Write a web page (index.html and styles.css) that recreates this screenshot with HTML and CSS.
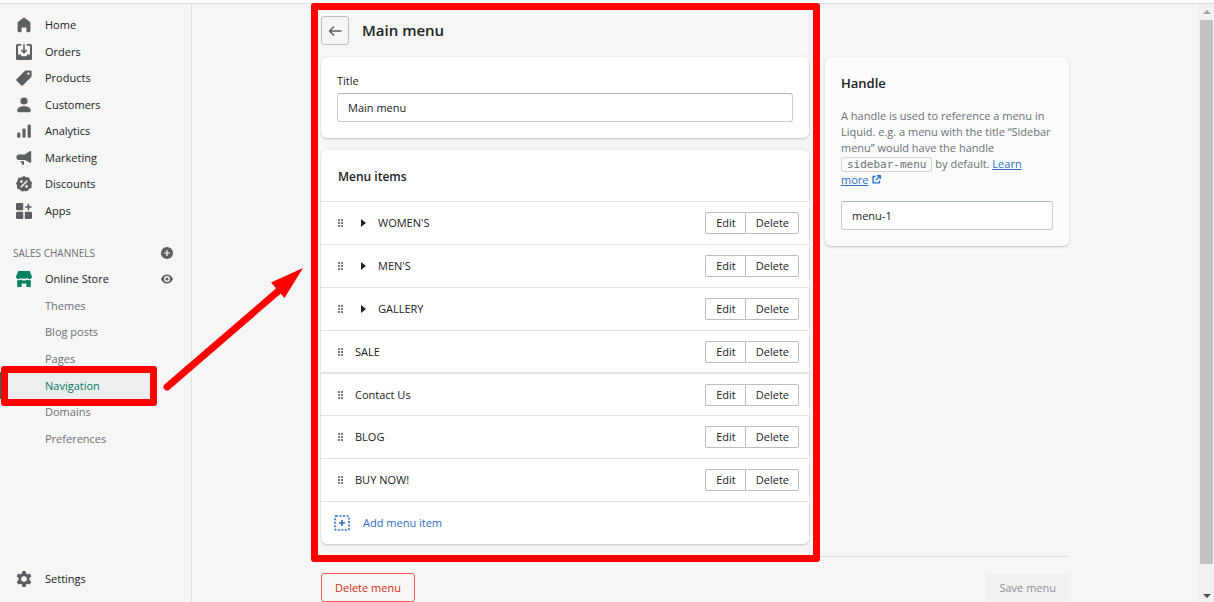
FILE: index.html
```html
<!DOCTYPE html>
<html lang="en">
<head>
<meta charset="utf-8">
<title>Main menu</title>
<link rel="stylesheet" href="styles.css">
</head>
<body>
<svg class="defs" aria-hidden="true">
  <symbol id="grip" viewBox="0 0 5 8"><path d="M0 0h2v2H0zM3 0h2v2H3zM0 3h2v2H0zM3 3h2v2H3zM0 6h2v2H0zM3 6h2v2H3z"/></symbol>
  <symbol id="caret" viewBox="0 0 5 8"><path d="M0 0l5 4-5 4z"/></symbol>
</svg>
<div class="topbar"></div>
<div class="frame">
  <nav class="sidebar" aria-label="Main">
    <ul class="nav nav-main">
      <li><a class="nav-link" href="#"><svg class="icon" viewBox="0 0 20 20"><path d="M18 7.261V17.500c0 .841-.672 1.500-1.500 1.500h-2c-.828 0-1.500-.659-1.500-1.500V13H7v4.477C7 18.318 6.328 19 5.500 19h-2c-.828 0-1.500-.682-1.500-1.523V7.261a1.500 1.500 0 0 1 .615-1.210l6.590-4.820a1.481 1.481 0 0 1 1.590 0l6.590 4.820A1.500 1.500 0 0 1 18 7.260z"/></svg>Home</a></li>
      <li><a class="nav-link" href="#"><svg class="icon" viewBox="0 0 20 20"><path d="M11 1a1 1 0 1 0-2 0v7.600L7.700 7.300a1 1 0 0 0-1.400 1.400l3 3a1 1 0 0 0 1.400 0l3-3a1 1 0 0 0-1.400-1.400L11 8.600z"/><path d="M2 0h4.500v2.200H2.500V13h3.300l1.200 2.400h6l1.200-2.400h3.300V2.200h-4V0H18a2 2 0 0 1 2 2v16a2 2 0 0 1-2 2H2a2 2 0 0 1-2-2V2a2 2 0 0 1 2-2z"/></svg>Orders</a></li>
      <li><a class="nav-link" href="#"><svg class="icon" viewBox="0 0 20 20"><path fill-rule="evenodd" d="M11 1.200Q11.700.500 12.700.500H18A1.500 1.500 0 0 1 19.500 2v5.300q0 1-.7 1.700L9 18.900a2 2 0 0 1-2.800 0l-5.100-5.100a2 2 0 0 1 0-2.800zM15.500 6a1.500 1.500 0 1 0 0-3 1.500 1.500 0 0 0 0 3z"/></svg>Products</a></li>
      <li><a class="nav-link" href="#"><svg class="icon" viewBox="0 0 20 20"><circle cx="10" cy="5" r="4.500"/><path d="M1.500 16.500C2 13 5.500 11.500 10 11.500s8 1.500 8.500 5c.2 1.500-.8 2.500-2 2.500h-13c-1.200 0-2.200-1-2-2.500z"/></svg>Customers</a></li>
      <li><a class="nav-link" href="#"><svg class="icon" viewBox="0 0 20 20"><rect x="1.500" y="12" width="4" height="6.500" rx="1.500"/><rect x="8" y="7" width="4" height="11.500" rx="1.500"/><rect x="14.500" y="2" width="4" height="16.500" rx="1.500"/></svg>Analytics</a></li>
      <li><a class="nav-link" href="#"><svg class="icon" viewBox="0 0 20 20"><path d="M17.500 1.300c.7-.5 1.500 0 1.500.8v13c0 .8-.8 1.200-1.500.8L11 12.500H4A3.500 3.500 0 0 1 4 5.500h7zM5 14h5v3.500a1.300 1.300 0 0 1-2.600 0V16.500z"/></svg>Marketing</a></li>
      <li><a class="nav-link" href="#"><svg class="icon" viewBox="0 0 20 20"><path d="M10 0l3 1.600 3.500.3 1 3.400L20 8l-.6 3.300.1 3.500-3.200 1.500L14 19l-3.400-.3L7 19.500 4.700 17l-3.300-1.300L1.200 12 0 9l2-2.900.8-3.500 3.600-.8z"/><path class="cut-line" d="M6 14l8-8"/><circle class="cut" cx="6.800" cy="7" r="1.600"/><circle class="cut" cx="13.200" cy="13" r="1.600"/></svg>Discounts</a></li>
      <li><a class="nav-link" href="#"><svg class="icon" viewBox="0 0 20 20"><rect x="0" y="0" width="9" height="9" rx="1.500"/><rect x="0" y="11" width="9" height="9" rx="1.500"/><rect x="11" y="11" width="9" height="9" rx="1.500"/><path d="M14.500 1h2v3h3v2h-3v3h-2V6h-3V4h3z"/></svg>Apps</a></li>
    </ul>
    <div class="nav-heading"><span>SALES CHANNELS</span>
      <button class="icon-button" type="button" aria-label="Add sales channel"><svg class="icon-small" viewBox="0 0 20 20"><circle cx="10" cy="10" r="10"/><path class="cut-line" d="M10 5v10M5 10h10"/></svg></button>
    </div>
    <ul class="nav nav-store">
      <li class="nav-split"><a class="nav-link" href="#"><svg class="icon icon-green" viewBox="0 0 20 20"><path d="M3 0h14l2.800 6.500A3 3 0 0 1 14 8a3 3 0 0 1-4 1.200A3 3 0 0 1 6 8 3 3 0 0 1 .2 6.500z"/><path d="M1.500 11.500q2.500.500 4.500-1 2 1.500 4 1.500t4-1.500q2 1.500 4.500 1V20H13v-4.500H7V20H1.500z"/></svg>Online Store</a>
        <button class="icon-button" type="button" aria-label="View your online store"><svg class="icon-small" viewBox="0 0 20 20"><path fill-rule="evenodd" d="M0 10C1.500 5.500 5.500 2.500 10 2.500S18.500 5.500 20 10c-1.500 4.500-5.500 7.500-10 7.500S1.500 14.500 0 10zm10 5a5 5 0 1 0 0-10 5 5 0 0 0 0 10z"/><circle cx="10" cy="10" r="2.700"/></svg></button></li>
      <li><a class="nav-link nav-sub" href="#">Themes</a></li>
      <li><a class="nav-link nav-sub" href="#">Blog posts</a></li>
      <li><a class="nav-link nav-sub" href="#">Pages</a></li>
      <li class="nav-current"><a class="nav-link nav-sub" href="#" aria-current="page">Navigation</a>
        <span class="mark mark-nav"></span>
        <svg class="arrow" viewBox="0 0 145 130"><path class="arrow-line" d="M7 122L123 22"/><path d="M143 3L111 17.500 124.500 33z"/></svg></li>
      <li><a class="nav-link nav-sub" href="#">Domains</a></li>
      <li><a class="nav-link nav-sub" href="#">Preferences</a></li>
    </ul>
    <a class="nav-link nav-settings" href="#"><svg class="icon" viewBox="0 0 20 20"><path fill-rule="evenodd" d="M8 0h4l.6 3 1.700 1 2.900-1 2 3.500L17 8.500v3l2.200 2-2 3.500-2.900-1-1.700 1-.6 3H8l-.6-3-1.700-1-2.900 1-2-3.500 2.200-2v-3l-2.200-2 2-3.500 2.900 1 1.700-1zm2 13.500a3.500 3.500 0 1 0 0-7 3.500 3.500 0 0 0 0 7z"/></svg>Settings</a>
  </nav>

  <main class="main">
    <div class="page">
      <header class="page-header">
        <button class="back" type="button" aria-label="Back"><svg viewBox="0 0 14 12"><path d="M13 6H1.500M5.500 2L1.500 6l4 4"/></svg></button>
        <h1>Main menu</h1>
      </header>
      <div class="columns">
        <div class="primary">
          <section class="card card-pad">
            <label for="title">Title</label>
            <input id="title" type="text" value="Main menu">
          </section>
          <section class="card">
            <h2 class="card-heading">Menu items</h2>
            <ul class="rows">
              <li class="row"><svg class="grip"><use href="#grip"/></svg><svg class="caret"><use href="#caret"/></svg><span class="row-name">WOMEN'S</span><div class="group"><button type="button">Edit</button><button type="button">Delete</button></div></li>
              <li class="row"><svg class="grip"><use href="#grip"/></svg><svg class="caret"><use href="#caret"/></svg><span class="row-name">MEN'S</span><div class="group"><button type="button">Edit</button><button type="button">Delete</button></div></li>
              <li class="row"><svg class="grip"><use href="#grip"/></svg><svg class="caret"><use href="#caret"/></svg><span class="row-name">GALLERY</span><div class="group"><button type="button">Edit</button><button type="button">Delete</button></div></li>
              <li class="row row-short"><svg class="grip"><use href="#grip"/></svg><span class="row-name">SALE</span><div class="group"><button type="button">Edit</button><button type="button">Delete</button></div></li>
              <li class="row row-divided"><svg class="grip"><use href="#grip"/></svg><span class="row-name">Contact Us</span><div class="group"><button type="button">Edit</button><button type="button">Delete</button></div></li>
              <li class="row"><svg class="grip"><use href="#grip"/></svg><span class="row-name">BLOG</span><div class="group"><button type="button">Edit</button><button type="button">Delete</button></div></li>
              <li class="row"><svg class="grip"><use href="#grip"/></svg><span class="row-name">BUY NOW!</span><div class="group"><button type="button">Edit</button><button type="button">Delete</button></div></li>
            </ul>
            <button class="add" type="button"><svg viewBox="0 0 16 16"><rect class="dots" x="1" y="1" width="14" height="14" rx="1"/><path d="M8 5v6M5 8h6"/></svg>Add menu item</button>
          </section>
          <span class="mark mark-menu"></span>
        </div>
        <aside class="card card-pad handle">
          <h2>Handle</h2>
          <p>A handle is used to reference a menu in Liquid. e.g. a menu with the title “Sidebar menu” would have the handle <code>sidebar-menu</code> by default. <a href="#"><u>Learn</u> <span class="link-end"><u>more</u><svg class="external" viewBox="0 0 10 10"><path d="M4 1.700H1.200v7.100h7.100V6M5.500.8H9.200v3.700M9 1L4.300 5.700"/></svg></span></a></p>
          <input type="text" value="menu-1" aria-label="Handle">
        </aside>
      </div>
      <footer class="actions">
        <button class="button danger" type="button">Delete menu</button>
        <button class="button save" type="button" disabled>Save menu</button>
      </footer>
    </div>
  </main>

  <div class="scrollbar" aria-hidden="true">
    <svg class="scroll-arrow" viewBox="0 0 8 4"><path fill="#a3a3a3" d="M0 4l4-4 4 4z"/></svg>
    <div class="thumb"></div>
    <svg class="scroll-arrow" viewBox="0 0 8 4"><path fill="#505050" d="M0 0h8L4 4z"/></svg>
  </div>
</div>
</body>
</html>
```
FILE: styles.css
```css
* { box-sizing: border-box; }

body {
  margin: 0;
  min-height: 100vh;
  display: flex;
  flex-direction: column;
  background: #f6f6f6;
  color: #202223;
  font: 11px/16px "Open Sans", "Noto Sans", sans-serif;
}

button, input { font: inherit; color: inherit; }
button { margin: 0; padding: 0; cursor: pointer; }
ul { list-style: none; margin: 0; padding: 0; }
h1, h2, p { margin: 0; }
.defs { position: absolute; width: 0; height: 0; }

.topbar { height: 4px; background: #fff; border-bottom: 1px solid #dcdcdc; }
.frame { flex: 1; display: flex; }

/* Sidebar */
.sidebar {
  width: 192px;
  flex: none;
  display: flex;
  flex-direction: column;
  padding: 8px 0 10px;
  border-right: 1px solid #dfe0e1;
  font-weight: 500;
}
.nav { display: grid; grid-auto-rows: 1fr; }
.nav-main { height: 212px; }
.nav-store { height: 186px; }
.nav-link {
  display: flex;
  align-items: center;
  gap: 13px;
  height: 100%;
  padding-left: 16px;
  color: #202223;
  text-decoration: none;
}
.nav-sub { padding-left: 45px; color: #6d7175; }
.icon { width: 16px; height: 16px; fill: #5c5f62; }
.icon-green { fill: #008060; }
.icon-small { display: block; width: 12px; height: 12px; fill: #5c5f62; }
.icon-button { border: 0; background: none; }
.cut { fill: #f6f6f6; }
.cut-line { fill: none; stroke: #f6f6f6; stroke-width: 2; }
.nav-heading, .nav-split {
  display: flex;
  align-items: center;
  justify-content: space-between;
  padding-right: 18px;
}
.nav-heading {
  height: 26px;
  margin-top: 16px;
  padding-left: 13px;
  font-size: 10px;
  color: #6d7175;
}
.nav-current { position: relative; }
.nav-current .nav-link {
  margin-right: 40px;
  background: #edeeef;
  border-left: 3px solid #008060;
  padding-left: 42px;
  color: #007a5c;
}
.nav-settings { height: 26px; margin-top: auto; }

/* Annotations */
.mark {
  position: absolute;
  border: 7px solid #f00;
  border-radius: 3px;
  pointer-events: none;
}
.mark-nav { top: -6px; bottom: -7px; left: 1px; width: 156px; }
.mark-menu { top: -54px; right: -11px; bottom: -18px; left: -10px; }
.arrow {
  position: absolute;
  z-index: 1;
  left: 160px;
  bottom: 4px;
  width: 145px;
  height: 130px;
  fill: #f00;
  pointer-events: none;
}
.arrow-line { stroke: #f00; stroke-width: 7; stroke-linecap: round; }

/* Page */
.main { flex: 1; min-width: 0; padding: 12px 16px 0; }
.page { max-width: 748px; margin: 0 auto; }
.page-header { display: flex; align-items: flex-start; gap: 13px; margin-bottom: 12px; }
.back {
  width: 28px;
  height: 29px;
  display: grid;
  place-items: center;
  background: none;
  border: 1px solid #babfc3;
  border-radius: 3px;
}
.back svg { width: 14px; height: 12px; fill: none; stroke: #5c5f62; stroke-width: 1.5; stroke-linecap: round; stroke-linejoin: round; }
h1 { font-size: 15px; line-height: 28px; font-weight: 600; }
h2 { font-size: 13px; line-height: 20px; font-weight: 600; }

.columns { display: grid; grid-template-columns: 2fr 1fr; align-items: start; gap: 16px; }
.primary { position: relative; display: grid; gap: 12px; }
.card {
  background: #fff;
  border-radius: 6px;
  box-shadow: 0 0 4px rgba(23, 24, 24, .06), 0 1px 2px rgba(0, 0, 0, .18);
}
.card-pad { padding: 16px; }
label { display: block; margin-bottom: 4px; }
input {
  display: block;
  width: 100%;
  height: 29px;
  padding: 0 10px;
  background: #fff;
  border: 1px solid #c9cccf;
  border-top-color: #aeb4b9;
  border-radius: 3px;
}

.card-heading { padding: 17px 17px 14px; font-size: 12px; }
.row {
  display: flex;
  align-items: center;
  height: 43px;
  padding: 0 10px 0 17px;
  border-top: 1px solid #e1e3e5;
}
.row-short { height: 42px; }
.row-divided { border-top-width: 2px; }
.grip { width: 5px; height: 8px; fill: #7b7f83; }
.caret { width: 5px; height: 8px; margin-left: 18px; fill: #202223; }
.row-name { flex: 1; margin-left: 12px; }
.group { display: flex; }
.group button {
  height: 22px;
  padding: 0 9px 0 10px;
  font-weight: 500;
  background: #fff;
  border: 1px solid #babfc3;
  border-radius: 2px;
}
.group button:first-child { border-right: 0; border-radius: 2px 0 0 2px; }
.group button:last-child { border-radius: 0 2px 2px 0; }
.add {
  display: flex;
  align-items: center;
  gap: 13px;
  width: 100%;
  height: 43px;
  padding: 0 13px;
  background: none;
  border: 0;
  border-top: 1px solid #e1e3e5;
  color: #2c6ecb;
  font-weight: 500;
}
.add svg { width: 16px; height: 16px; fill: none; stroke: #2c6ecb; stroke-width: 1.6; }
.dots { stroke-dasharray: 2 1.500; }

.handle { background: #fafbfb; }
.handle p { margin: 15px 0 13px; color: #6d7175; }
.handle a { color: #2c6ecb; text-decoration: none; }
.link-end { white-space: nowrap; }
code {
  padding: 0 5px;
  font: 11px/12px "DejaVu Sans Mono", monospace;
  border: 1px solid #d2d5d8;
  border-radius: 2px;
}
.external { width: 9px; height: 9px; margin-left: 4px; vertical-align: baseline; fill: none; stroke: #2c6ecb; stroke-width: 1.5; }

.actions {
  display: flex;
  justify-content: space-between;
  margin-top: 12px;
  padding-top: 16px;
  border-top: 1px solid #dfe0e1;
}
.button { height: 29px; padding: 0 13px; border: 1px solid; border-radius: 3px; font-weight: 500; }
.danger { background: none; border-color: #fd5749; color: #d72c0d; }
.save { padding: 0 12px; background: #f1f1f1; border-color: #f1f1f1; color: #8c9196; }

/* Scrollbar */
.scrollbar {
  flex: none;
  width: 16px;
  display: flex;
  flex-direction: column;
  align-items: center;
  background: #f1f1f1;
  padding: 6px 1px 4px 2px;
}
.scroll-arrow { width: 8px; height: 4px; }
.thumb { flex: 1; width: 13px; margin: 6px 0 30px; background: #c1c1c1; }
```
